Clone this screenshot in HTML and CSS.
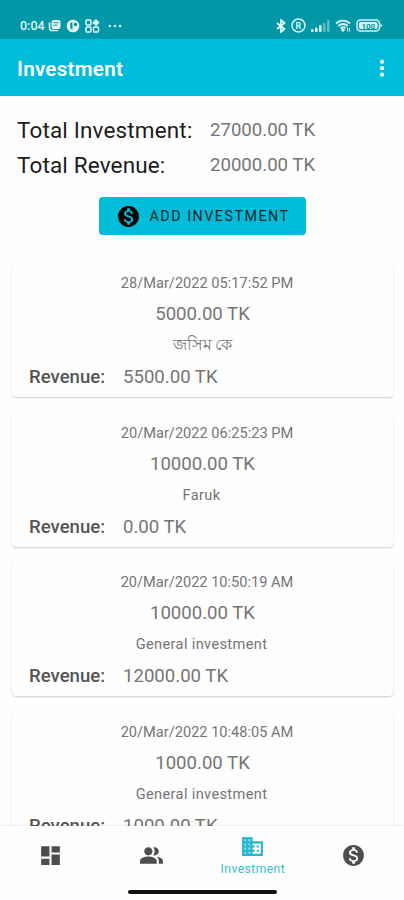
FILE: index.html
```html
<!DOCTYPE html>
<html lang="en">
<head>
    <meta charset="UTF-8">
    <meta name="viewport" content="width=device-width, initial-scale=1.0">
    <title>Investment</title>
    <link rel="stylesheet" href="styles.css">
</head>
<body>
    <div class="status-bar">
        <span class="clock">0:04</span>
        <svg class="status-news" width="13" height="13" viewBox="0 0 13 13">
            <path d="M1.500 3.500v5.500a2.500 2.500 0 0 0 2.500 2.500H10" fill="none" stroke="#e3f6f8" stroke-width="1.600"/>
            <rect x="3.500" y="1" width="9" height="9" rx="2" fill="#e3f6f8"/>
            <path d="M5.500 3.800h5M5.500 6.200h4" stroke="#0097a7" stroke-width="1"/>
        </svg>
        <svg class="status-app" width="14" height="14" viewBox="0 0 14 14">
            <circle cx="7" cy="7" r="6.300" fill="#e9fafb"/>
            <path d="M4.200 3.500h2.300v7.200a4 4 0 0 1-2.300-2zM8 3.800h1.600a1.600 1.600 0 0 1 0 3.200H8z" fill="#0097a7"/>
        </svg>
        <svg class="status-grid" width="15" height="14" viewBox="0 0 15 14" fill="none" stroke="#e3f6f8" stroke-width="1.500">
            <rect x="1" y="1" width="5" height="5" rx="1"/>
            <rect x="1" y="8" width="5" height="5" rx="1"/>
            <rect x="8.500" y="8" width="5" height="5" rx="1"/>
            <path d="M11 0l3.600 3.600L11 7.200 7.400 3.600z" fill="#e3f6f8" stroke="none"/>
        </svg>
        <svg class="status-more" width="14" height="4" viewBox="0 0 14 4" fill="#d5f0f3">
            <circle cx="1.800" cy="2" r="1.300"/>
            <circle cx="6.900" cy="2" r="1.300"/>
            <circle cx="12" cy="2" r="1.300"/>
        </svg>
        <div class="status-right">
            <svg width="10" height="14" viewBox="0 0 10 14" fill="none" stroke="#e9fafb" stroke-width="1.700">
                <path d="M1 4l7.500 6L5 13V1l3.500 3L1 10"/>
            </svg>
            <svg class="status-r" width="15" height="15" viewBox="0 0 15 15">
                <circle cx="7.500" cy="7.500" r="6.500" fill="none" stroke="#d5f0f3" stroke-width="1.500"/>
                <text x="7.500" y="10.700" text-anchor="middle" class="status-letter">R</text>
            </svg>
            <svg class="status-signal" width="19" height="12" viewBox="0 0 19 12" fill="#e3f6f8">
                <rect x="0" y="9" width="2.600" height="3" rx="1"/>
                <rect x="4" y="7.500" width="2.600" height="4.500" rx="1"/>
                <rect x="8" y="5" width="2.600" height="7" rx="1"/>
                <rect x="12" y="3" width="2.600" height="9" rx="1" opacity=".4"/>
                <rect x="16" y="0" width="2.600" height="12" rx="1" opacity=".4"/>
            </svg>
            <svg class="status-wifi" width="16" height="13" viewBox="0 0 16 13" fill="none" stroke="#d5f0f3" stroke-width="1.900">
                <path d="M1 4.500a10 10 0 0 1 14 0M3.300 7a6.600 6.600 0 0 1 9.400 0M5.600 9.300a3.300 3.300 0 0 1 4.800 0"/>
                <circle cx="8" cy="11" r=".8"/>
                <path d="M12.500 8.500v4M14.500 9v3.500" stroke-width="1"/>
            </svg>
            <svg class="status-battery" width="27" height="13" viewBox="0 0 27 13">
                <rect x="1" y="1" width="22.500" height="11" rx="3.500" fill="none" stroke="#d5f0f3" stroke-width="1.500"/>
                <rect x="3" y="3" width="18.500" height="7" rx="1.500" fill="#d5f0f3"/>
                <path d="M24.500 4.500l2 2-2 2z" fill="#d5f0f3"/>
                <text x="12.300" y="9.600" text-anchor="middle" class="battery-level">100</text>
            </svg>
        </div>
    </div>

    <header class="app-bar">
        <h1>Investment</h1>
        <svg width="6" height="20" viewBox="0 0 6 20" fill="#fff">
            <circle cx="3" cy="2.800" r="2.100"/>
            <circle cx="3" cy="9.200" r="2.100"/>
            <circle cx="3" cy="15.600" r="2.100"/>
        </svg>
    </header>

    <main class="content">
        <div class="totals">
            <span class="total-label">Total Investment:</span>
            <span class="total-value">27000.00 TK</span>
            <span class="total-label">Total Revenue:</span>
            <span class="total-value">20000.00 TK</span>
        </div>

        <button class="add-button">
            <svg width="25" height="25" viewBox="0 0 24 24" fill="#000">
                <path d="M12 2C6.480 2 2 6.480 2 12s4.480 10 10 10 10-4.480 10-10S17.520 2 12 2zm1.410 16.090V20h-2.670v-1.930c-1.710-.36-3.160-1.460-3.270-3.400h1.960c.1 1.050.82 1.870 2.650 1.870 1.960 0 2.400-.98 2.400-1.590 0-.83-.44-1.610-2.670-2.140-2.480-.6-4.180-1.620-4.180-3.670 0-1.720 1.390-2.840 3.110-3.210V4h2.670v1.950c1.860.45 2.790 1.860 2.850 3.390H14.300c-.05-1.110-.64-1.870-2.220-1.870-1.500 0-2.400.68-2.400 1.640 0 .84.65 1.390 2.670 1.910s4.180 1.390 4.180 3.910c-.01 1.830-1.380 2.830-3.120 3.160z"/>
            </svg>
            ADD INVESTMENT
        </button>

        <div class="card-list">
            <div class="card">
                <p class="date">28/Mar/2022 05:17:52 PM</p>
                <p class="amount">5000.00 TK</p>
                <p class="investor bangla" lang="bn">জসিম কে</p>
                <p class="revenue"><b>Revenue:</b><span>5500.00 TK</span></p>
            </div>
            <div class="card">
                <p class="date">20/Mar/2022 06:25:23 PM</p>
                <p class="amount">10000.00 TK</p>
                <p class="investor">Faruk</p>
                <p class="revenue"><b>Revenue:</b><span>0.00 TK</span></p>
            </div>
            <div class="card">
                <p class="date">20/Mar/2022 10:50:19 AM</p>
                <p class="amount">10000.00 TK</p>
                <p class="investor">General investment</p>
                <p class="revenue"><b>Revenue:</b><span>12000.00 TK</span></p>
            </div>
            <div class="card">
                <p class="date">20/Mar/2022 10:48:05 AM</p>
                <p class="amount">1000.00 TK</p>
                <p class="investor">General investment</p>
                <p class="revenue"><b>Revenue:</b><span>1000.00 TK</span></p>
            </div>
        </div>
    </main>

    <footer class="bottom">
        <nav class="bottom-nav">
            <a class="nav-item">
                <svg width="25" height="25" viewBox="0 0 24 24"><path d="M3 13h8V3H3v10zm0 8h8v-6H3v6zm10 0h8V11h-8v10zm0-18v6h8V3h-8z"/></svg>
            </a>
            <a class="nav-item">
                <svg width="25" height="25" viewBox="0 0 24 24"><path d="M16.670 13.130C18.040 14.060 19 15.320 19 17v3h4v-3c0-2.180-3.570-3.470-6.330-3.870zM15 12c2.210 0 4-1.790 4-4s-1.790-4-4-4c-.47 0-.91.1-1.330.24C14.500 5.270 15 6.580 15 8s-.5 2.730-1.330 3.760c.42.14.86.24 1.330.24zM9 12c2.210 0 4-1.790 4-4s-1.790-4-4-4-4 1.790-4 4 1.790 4 4 4zm0 1c-2.670 0-8 1.340-8 4v3h16v-3c0-2.660-5.330-4-8-4z"/></svg>
            </a>
            <a class="nav-item active">
                <svg width="25" height="25" viewBox="0 0 24 24"><path class="tint" d="M2 3h10v18H2z"/><path d="M12 7V3H2v18h20V7H12zM6 19H4v-2h2v2zm0-4H4v-2h2v2zm0-4H4V9h2v2zm0-4H4V5h2v2zm4 12H8v-2h2v2zm0-4H8v-2h2v2zm0-4H8V9h2v2zm0-4H8V5h2v2zm10 12h-8v-2h2v-2h-2v-2h2v-2h-2V9h8v10zm-2-8h-2v2h2v-2zm0 4h-2v2h2v-2z"/></svg>
                <span>Investment</span>
            </a>
            <a class="nav-item">
                <svg width="25" height="25" viewBox="0 0 24 24"><path d="M12 2C6.480 2 2 6.480 2 12s4.480 10 10 10 10-4.480 10-10S17.520 2 12 2zm1.410 16.090V20h-2.670v-1.930c-1.710-.36-3.160-1.460-3.270-3.400h1.960c.1 1.050.82 1.870 2.650 1.870 1.960 0 2.400-.98 2.400-1.590 0-.83-.44-1.610-2.670-2.140-2.480-.6-4.180-1.620-4.180-3.670 0-1.720 1.390-2.840 3.110-3.210V4h2.670v1.950c1.860.45 2.790 1.860 2.850 3.390H14.300c-.05-1.110-.64-1.870-2.220-1.870-1.500 0-2.400.68-2.400 1.640 0 .84.65 1.390 2.670 1.910s4.180 1.390 4.180 3.910c-.01 1.830-1.380 2.830-3.120 3.160z"/></svg>
            </a>
        </nav>
        <div class="home-line"></div>
    </footer>
</body>
</html>
```
FILE: styles.css
```css
* {
    box-sizing: border-box;
}
body {
    margin: 0;
    height: 900px;
    display: flex;
    flex-direction: column;
    overflow: hidden;
    background-color: #fefefe;
    font-family: Roboto, sans-serif;
    color: #757575;
}

/* Status bar */
.status-bar {
    height: 39px;
    flex: none;
    display: flex;
    align-items: center;
    padding: 12px 21px 0 20px;
    background-color: #0097a7;
}
.clock {
    width: 28px;
    font-size: 12.5px;
    font-weight: 500;
    color: #e3f6f8;
}
.status-app {
    margin-left: 5px;
}
.status-grid {
    margin-left: 5px;
}
.status-more {
    margin-left: 8px;
}
.status-right {
    margin-left: auto;
    display: flex;
    align-items: center;
}
.status-r,
.status-signal,
.status-wifi,
.status-battery {
    margin-left: 5px;
}
.status-letter {
    font-size: 9px;
    font-weight: 700;
    fill: #d5f0f3;
}
.battery-level {
    font-size: 8px;
    font-weight: 700;
    fill: #0097a7;
}

/* App bar */
.app-bar {
    height: 57px;
    flex: none;
    display: flex;
    align-items: center;
    justify-content: space-between;
    padding: 3px 19px 0 17px;
    background-color: #00bcd8;
}
.app-bar h1 {
    margin: 0;
    font-size: 20.6px;
    font-weight: 600;
    letter-spacing: 0.25px;
    color: #fff;
}

/* Content */
.content {
    flex: 1;
    min-height: 0;
    overflow: hidden;
    display: flex;
    flex-direction: column;
}
.totals {
    display: grid;
    grid-template-columns: 192px auto;
    grid-auto-rows: 35px;
    align-items: center;
    padding: 16px 0 0 17px;
}
.total-label {
    font-size: 22.5px;
    letter-spacing: 0.15px;
    color: #1c1c1c;
}
.total-value {
    padding-left: 1px;
    font-size: 18.6px;
}
.add-button {
    flex: none;
    align-self: center;
    width: 207px;
    height: 38px;
    margin: 15px 0 29px;
    padding: 0 0 0 17px;
    display: flex;
    align-items: center;
    gap: 9px;
    border: none;
    border-radius: 4px;
    background-color: #00bcd8;
    font-family: inherit;
    font-size: 14.3px;
    font-weight: 400;
    letter-spacing: 1.5px;
    color: #06262b;
}
.card-list {
    display: flex;
    flex-direction: column;
    gap: 16.6px;
    padding: 0 11px 0 12px;
}
.card {
    flex: none;
    height: 133px;
    padding-top: 3px;
    border-radius: 4px;
    background-color: #fefefe;
    box-shadow: 0 1px 2px rgba(0, 0, 0, 0.2);
    text-align: center;
}
.card p {
    margin: 0;
}
.date {
    padding-left: 9px;
    font-size: 14.6px;
    line-height: 32px;
}
.amount {
    font-size: 18.6px;
    line-height: 30px;
}
.investor {
    padding-right: 2px;
    font-size: 14.6px;
    letter-spacing: 0.35px;
    line-height: 32px;
}
.investor.bangla {
    padding-right: 0;
    height: 32px;
    font-size: 15.8px;
    letter-spacing: 0;
}
.revenue {
    display: flex;
    padding-left: 17px;
    font-size: 18.6px;
    line-height: 32px;
}
.revenue b {
    width: 94px;
    text-align: left;
    font-weight: 500;
    color: #555;
}

/* Bottom navigation */
.bottom {
    flex: none;
    height: 74px;
    background-color: #fefefe;
    box-shadow: 0 -1px 1px rgba(0, 0, 0, 0.05);
}
.bottom-nav {
    height: 58px;
    display: flex;
}
.nav-item {
    flex: 1;
    display: flex;
    flex-direction: column;
    align-items: center;
    justify-content: center;
    fill: #4d4d4d;
}
.nav-item.active {
    justify-content: flex-start;
    padding: 8px 0 0 1px;
    fill: #22b8d1;
    color: #35bdd4;
}
.nav-item .tint {
    fill: #8fdce8;
}
.nav-item span {
    margin-top: 3px;
    font-size: 12px;
    line-height: 14px;
    letter-spacing: 0.5px;
}
.home-line {
    width: 149px;
    height: 4px;
    margin: 6px auto 0;
    border-radius: 2px;
    background-color: #111;
}
```
